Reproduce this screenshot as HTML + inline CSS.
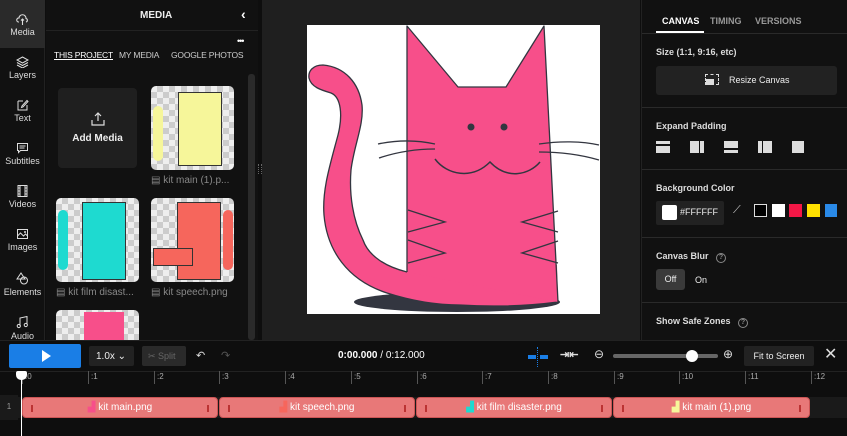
<!DOCTYPE html>
<html><head><style>
*{box-sizing:border-box;margin:0;padding:0}
body{width:847px;height:436px;background:#0e0e0e;font-family:"Liberation Sans",sans-serif;color:#ddd;position:relative;overflow:hidden;font-size:10px}
.a{position:absolute}
.side{left:0;top:0;width:45px;height:340px;background:#111;border-right:1px solid #222}
.si{position:absolute;left:0;width:45px;text-align:center;font-size:9px;color:#ddd}
.si svg{display:block;margin:0 auto 2px}
.thumb{position:absolute;border-radius:5px;overflow:hidden;background-color:#eee;background-image:linear-gradient(45deg,#ccc 25%,transparent 25%,transparent 75%,#ccc 75%),linear-gradient(45deg,#ccc 25%,transparent 25%,transparent 75%,#ccc 75%);background-size:12px 12px;background-position:0 0,6px 6px}
.cap{position:absolute;font-size:10px;color:#888}
.rp{left:641px;top:0;width:206px;height:340px;background:#111;border-left:1px solid #222}
.sec{position:absolute;left:0;width:206px;border-top:1px solid #2a2a2a}
.lbl{position:absolute;left:14px;font-size:9px;font-weight:bold;color:#ddd}
.clip{position:absolute;top:397px;height:21px;background:#e87878;border-radius:4px;border:1px solid #c55;color:#fff;font-size:10px}
.clip .t{position:absolute;top:4px;left:0;width:100%;text-align:center}
.clip i{position:absolute;top:7px;width:2px;height:7px;background:#b33}
.tick{position:absolute;top:371px;height:13px;border-left:1px solid #555;font-size:8px;color:#aaa;padding-left:2px;line-height:11px}
</style></head><body>
<div class="a side">
<div class="a" style="left:0;top:0;width:45px;height:48px;background:#2a2a2a"></div>
<div class="si" style="top:13px"><svg width="13" height="12" viewBox="0 0 13 12"><path d="M3 9H2.5A2 2 0 0 1 3 5a3.5 3.5 0 0 1 7 0.5A1.8 1.8 0 0 1 10 9H10M6.5 6v6M5 7.5l1.5-1.5 1.5 1.5" fill="none" stroke="#ddd" stroke-width="1.1"/></svg>Media</div>
<div class="si" style="top:56px"><svg width="13" height="12" viewBox="0 0 13 12"><path d="M6.5 1L12 4 6.5 7 1 4zM1 6.5l5.5 3 5.5-3M1 9l5.5 3 5.5-3" fill="none" stroke="#ddd" stroke-width="1"/></svg>Layers</div>
<div class="si" style="top:99px"><svg width="13" height="12" viewBox="0 0 13 12"><path d="M2 2h5M2 2v9h9V6M6 7l5-5.5 1 1-5 5.5-1.5.5z" fill="none" stroke="#ddd" stroke-width="1"/></svg>Text</div>
<div class="si" style="top:142px"><svg width="13" height="12" viewBox="0 0 13 12"><path d="M1.5 1.5h10v7h-7l-2 2v-2h-1zM3.5 4h6M3.5 6h5" fill="none" stroke="#ddd" stroke-width="1"/></svg>Subtitles</div>
<div class="si" style="top:185px"><svg width="13" height="12" viewBox="0 0 13 12"><path d="M2 0.5h9v11H2zM4 0.5v11M9 0.5v11M2 3h2M2 6h2M2 9h2M9 3h2M9 6h2M9 9h2" fill="none" stroke="#ddd" stroke-width="1"/></svg>Videos</div>
<div class="si" style="top:228px"><svg width="13" height="12" viewBox="0 0 13 12"><path d="M1.5 1.5h10v9h-10zM1.5 8l3-3 3 3 2-2 2 2" fill="none" stroke="#ddd" stroke-width="1"/><circle cx="9" cy="4" r="1" fill="#ddd"/></svg>Images</div>
<div class="si" style="top:272px"><svg width="13" height="13" viewBox="0 0 13 13"><path d="M5 1l4 6H1z" fill="none" stroke="#ddd" stroke-width="1"/><circle cx="8" cy="8.5" r="3.5" fill="none" stroke="#ddd" stroke-width="1"/></svg>Elements</div>
<div class="si" style="top:316px"><svg width="13" height="13" viewBox="0 0 13 13"><path d="M4 10V2l7-1.5v8" fill="none" stroke="#ddd" stroke-width="1"/><circle cx="2.8" cy="10" r="1.6" fill="none" stroke="#ddd"/><circle cx="9.8" cy="9" r="1.6" fill="none" stroke="#ddd"/></svg>Audio</div>
</div>
<div class="a" style="left:46px;top:0;width:212px;height:340px;background:#111"></div>
<div class="a" style="left:46px;top:30px;width:212px;height:1px;background:#222"></div>
<div class="a" style="left:140px;top:10px;font-size:10px;font-weight:bold;color:#eee">MEDIA</div>
<div class="a" style="left:241px;top:6px;font-size:14px;font-weight:bold;color:#fff">‹</div>
<div class="a" style="left:237px;top:36px;font-size:9px;color:#fff;letter-spacing:-1px">•••</div>
<div class="a" style="left:54px;top:50px;font-size:8.5px;color:#fff;text-decoration:underline;letter-spacing:-0.2px">THIS PROJECT</div>
<div class="a" style="left:119px;top:50px;font-size:8.5px;color:#ccc;letter-spacing:-0.2px">MY MEDIA</div>
<div class="a" style="left:171px;top:50px;font-size:8.5px;color:#ccc;letter-spacing:-0.2px">GOOGLE PHOTOS</div>
<div class="a" style="left:248px;top:74px;width:7px;height:266px;background:#2a2a2a;border-radius:3px"></div>
<div class="a" style="left:58px;top:88px;width:79px;height:80px;background:#1f1f1f;border-radius:4px;text-align:center;font-size:10px;font-weight:bold;color:#eee;padding-top:24px">
<svg width="14" height="14" viewBox="0 0 14 14" style="display:block;margin:0 auto 7px"><path d="M7 9V1M4 4l3-3 3 3M1 8v5h12V8" fill="none" stroke="#ddd" stroke-width="1.2"/></svg>Add Media</div>
<div class="thumb" style="left:151px;top:86px;width:83px;height:84px"><div class="a" style="left:27px;top:6px;width:44px;height:74px;background:#f6f69a;border:1px solid #333"></div><div class="a" style="left:2px;top:20px;width:10px;height:55px;background:#f6f69a;border-radius:8px"></div></div>
<div class="cap" style="left:151px;top:175px">▤ kit main (1).p...</div>
<div class="thumb" style="left:56px;top:198px;width:83px;height:84px"><div class="a" style="left:26px;top:4px;width:44px;height:78px;background:#1edad0;border:1px solid #333"></div><div class="a" style="left:2px;top:12px;width:10px;height:60px;background:#1edad0;border-radius:8px"></div></div>
<div class="cap" style="left:56px;top:287px">▤ kit film disast...</div>
<div class="thumb" style="left:151px;top:198px;width:83px;height:84px"><div class="a" style="left:26px;top:4px;width:44px;height:78px;background:#f6665c;border:1px solid #333"></div><div class="a" style="left:72px;top:12px;width:10px;height:60px;background:#f6665c;border-radius:8px"></div><div class="a" style="left:2px;top:50px;width:40px;height:18px;background:#f6665c;border:1px solid #333"></div></div>
<div class="cap" style="left:151px;top:287px">▤ kit speech.png</div>
<div class="thumb" style="left:56px;top:310px;width:83px;height:30px;border-radius:5px 5px 0 0"><div class="a" style="left:28px;top:2px;width:40px;height:30px;background:#f74f8a"></div></div>

<div class="a" style="left:262px;top:0;width:378px;height:340px;background:#1f1f1f"></div>
<div class="a" style="left:307px;top:25px;width:293px;height:289px;background:#fff;overflow:hidden">
<svg width="293" height="289" viewBox="0 0 293 289">
<ellipse cx="150" cy="277" rx="103" ry="10" fill="#333640"/>
<path d="M100 247 C80 242 62 232 56 215 C46 195 42 170 44 145 C47 120 57 100 55 80 C52 58 38 42 16 40 C6 40 1 46 2 53 C4 62 14 65 24 68 C34 72 36 90 31 110 C23 140 15 165 17 190 C20 225 40 255 80 268 C105 276 130 280 153 280 C185 282 220 281 251 277 L250 240 L100 240 Z" fill="#f74f8a"/>
<path d="M100 247 C80 242 62 232 56 215 C46 195 42 170 44 145 C47 120 57 100 55 80 C52 58 38 42 16 40 C6 40 1 46 2 53 C4 62 14 65 24 68 C34 72 36 90 31 110 C23 140 15 165 17 190 C20 225 40 255 80 268 C105 276 130 280 153 280 C185 282 220 281 251 277" fill="none" stroke="#333640" stroke-width="1.3"/>
<path d="M100 247 L100 1 L151 62 L199 62 L237 1 L251 277" fill="#f74f8a" stroke="#333640" stroke-width="1.3" stroke-linejoin="round"/>
<circle cx="164" cy="102" r="3.5" fill="#333640"/><circle cx="197" cy="102" r="3.5" fill="#333640"/>
<path d="M128 134 C140 150 165 155 183 137 C200 155 222 150 233 137" fill="none" stroke="#333640" stroke-width="1.5"/>
<path d="M71 119 C90 115 110 115 128 119 M72 133 C90 127 110 124 128 124 M232 119 C252 116 275 116 292 120 M232 127 C255 127 275 130 292 135" fill="none" stroke="#333640" stroke-width="1.3"/>
<path d="M101 185 L138 197 L101 207 M101 215 L138 228 L101 238 M251 186 L215 197 L251 207 M251 216 L215 228 L251 238" fill="none" stroke="#333640" stroke-width="1.3"/>
</svg></div>
<div class="a" style="left:258px;top:164px;width:4px;height:10px;border-left:1px dotted #666;border-right:1px dotted #666"></div>

<div class="a rp">
<div class="a" style="left:20px;top:16px;font-size:9px;font-weight:bold;color:#fff">CANVAS</div>
<div class="a" style="left:14px;top:31px;width:48px;height:2px;background:#fff"></div>
<div class="a" style="left:68px;top:16px;font-size:9px;font-weight:bold;color:#999">TIMING</div>
<div class="a" style="left:113px;top:16px;font-size:9px;font-weight:bold;color:#999">VERSIONS</div>
<div class="sec" style="top:33px"></div>
<div class="lbl" style="top:47px">Size (1:1, 9:16, etc)</div>
<div class="a" style="left:14px;top:66px;width:181px;height:29px;background:#222;border-radius:3px;font-size:9px;color:#eee;padding:9px 0 0 73px">Resize Canvas</div>
<div class="a" style="left:63px;top:74px;width:14px;height:11px;border:1px dashed #ddd"><div class="a" style="left:0;top:4px;width:8px;height:6px;background:#ddd"></div></div>
<div class="sec" style="top:107px"></div>
<div class="lbl" style="top:121px">Expand Padding</div>
<div class="a" style="left:14px;top:141px;width:14px;height:12px;background:#ddd;border-top:3px solid #ddd;box-shadow:inset 0 2px 0 #111"></div>
<div class="a" style="left:48px;top:141px;width:14px;height:12px;background:#ddd;box-shadow:inset -4px 0 0 #ddd,inset -5px 0 0 #111"></div>
<div class="a" style="left:82px;top:141px;width:14px;height:12px;background:#ddd;box-shadow:inset 0 -3px 0 #ddd,inset 0 -5px 0 #111"></div>
<div class="a" style="left:116px;top:141px;width:14px;height:12px;background:#ddd;box-shadow:inset 4px 0 0 #ddd,inset 5px 0 0 #111"></div>
<div class="a" style="left:150px;top:141px;width:12px;height:12px;background:#ddd"></div>
<div class="sec" style="top:169px"></div>
<div class="lbl" style="top:183px">Background Color</div>
<div class="a" style="left:14px;top:201px;width:68px;height:24px;background:#222;border-radius:2px"></div>
<div class="a" style="left:20px;top:205px;width:15px;height:15px;background:#fff;border-radius:2px"></div>
<div class="a" style="left:38px;top:207px;font-size:9px;color:#eee">#FFFFFF</div>
<div class="a" style="left:91px;top:204px;font-size:11px;color:#ccc">⟋</div>
<div class="a" style="left:112px;top:204px;width:13px;height:13px;background:#000;border:1px solid #ddd"></div>
<div class="a" style="left:130px;top:204px;width:13px;height:13px;background:#fff"></div>
<div class="a" style="left:147px;top:204px;width:13px;height:13px;background:#f31746"></div>
<div class="a" style="left:165px;top:204px;width:13px;height:13px;background:#ffe100"></div>
<div class="a" style="left:183px;top:204px;width:12px;height:13px;background:#2a8ae8"></div>
<div class="sec" style="top:237px"></div>
<div class="lbl" style="top:251px">Canvas Blur <span style="display:inline-block;width:10px;height:10px;border:1px solid #888;border-radius:50%;font-size:7px;text-align:center;line-height:8px;color:#888;margin-left:5px">?</span></div>
<div class="a" style="left:14px;top:269px;width:29px;height:21px;background:#3a3a3a;border-radius:3px;font-size:9px;color:#eee;text-align:center;line-height:21px">Off</div>
<div class="a" style="left:53px;top:275px;font-size:9px;color:#eee">On</div>
<div class="sec" style="top:302px"></div>
<div class="lbl" style="top:316px">Show Safe Zones <span style="display:inline-block;width:10px;height:10px;border:1px solid #888;border-radius:50%;font-size:7px;text-align:center;line-height:8px;color:#888;margin-left:5px">?</span></div>
</div>

<div class="a" style="left:0;top:340px;width:847px;height:96px;background:#0e0e0e;border-top:1px solid #222"></div>
<div class="a" style="left:9px;top:344px;width:72px;height:24px;background:#1a7ee6;border-radius:2px"><div class="a" style="left:33px;top:6px;border-left:9px solid #fff;border-top:6px solid transparent;border-bottom:6px solid transparent"></div></div>
<div class="a" style="left:89px;top:346px;width:45px;height:20px;background:#222;border-radius:2px;font-size:10px;color:#eee;padding:5px 0 0 7px">1.0x ⌄</div>
<div class="a" style="left:142px;top:346px;width:44px;height:20px;background:#2a2a2a;border-radius:2px;font-size:9px;color:#666;padding:5px 0 0 6px">✂ Split</div>
<div class="a" style="left:196px;top:349px;font-size:11px;color:#ddd">↶</div>
<div class="a" style="left:221px;top:349px;font-size:11px;color:#555">↷</div>
<div class="a" style="left:338px;top:350px;font-size:10px;color:#fff"><b>0:00.000</b> / 0:12.000</div>
<div class="a" style="left:528px;top:355px;width:20px;height:4px;border-left:8px solid #1a7ee6;border-right:8px solid #1a7ee6"></div>
<div class="a" style="left:537px;top:347px;width:1px;height:20px;border-left:1px dotted #1a7ee6"></div>
<div class="a" style="left:560px;top:348px;font-size:11px;color:#ddd;font-weight:bold">⇥⇤</div>
<div class="a" style="left:594px;top:347px;font-size:12px;color:#ddd">⊖</div>
<div class="a" style="left:613px;top:354px;width:105px;height:4px;background:#666;border-radius:2px"></div>
<div class="a" style="left:686px;top:350px;width:12px;height:12px;background:#fff;border-radius:50%"></div>
<div class="a" style="left:723px;top:347px;font-size:12px;color:#ddd">⊕</div>
<div class="a" style="left:744px;top:346px;width:70px;height:20px;background:#222;border-radius:2px;font-size:9px;color:#eee;text-align:center;line-height:20px">Fit to Screen</div>
<div class="a" style="left:824px;top:344px;font-size:16px;color:#ddd">✕</div>
<div class="a" style="left:0;top:371px;width:847px;height:1px;background:#222"></div>
<div class="tick" style="left:22px">:0</div><div class="tick" style="left:88px">:1</div><div class="tick" style="left:154px">:2</div><div class="tick" style="left:219px">:3</div><div class="tick" style="left:285px">:4</div><div class="tick" style="left:351px">:5</div><div class="tick" style="left:417px">:6</div><div class="tick" style="left:482px">:7</div><div class="tick" style="left:548px">:8</div><div class="tick" style="left:614px">:9</div><div class="tick" style="left:679px">:10</div><div class="tick" style="left:745px">:11</div><div class="tick" style="left:811px">:12</div>
<div class="a" style="left:0;top:395px;width:18px;height:25px;background:#1a1a1a;font-size:8px;color:#999;text-align:center;line-height:24px">1</div>
<div class="a" style="left:18px;top:397px;width:829px;height:21px;background:#1a1a1a"></div>
<div class="clip" style="left:22px;width:196px"><i style="left:8px"></i><i style="right:8px"></i><div class="t"><span style="color:#f74f8a">▟</span> kit main.png</div></div>
<div class="clip" style="left:219px;width:196px"><i style="left:8px"></i><i style="right:8px"></i><div class="t"><span style="color:#f6665c">▟</span> kit speech.png</div></div>
<div class="clip" style="left:416px;width:196px"><i style="left:8px"></i><i style="right:8px"></i><div class="t"><span style="color:#1edad0">▟</span> kit film disaster.png</div></div>
<div class="clip" style="left:613px;width:197px"><i style="left:8px"></i><i style="right:8px"></i><div class="t"><span style="color:#f6f69a">▟</span> kit main (1).png</div></div>
<div class="a" style="left:21px;top:374px;width:1px;height:62px;background:#fff"></div>
<div class="a" style="left:16px;top:371px;width:11px;height:9px;background:#fff;border-radius:2px 2px 5px 5px"></div>
</body></html>
